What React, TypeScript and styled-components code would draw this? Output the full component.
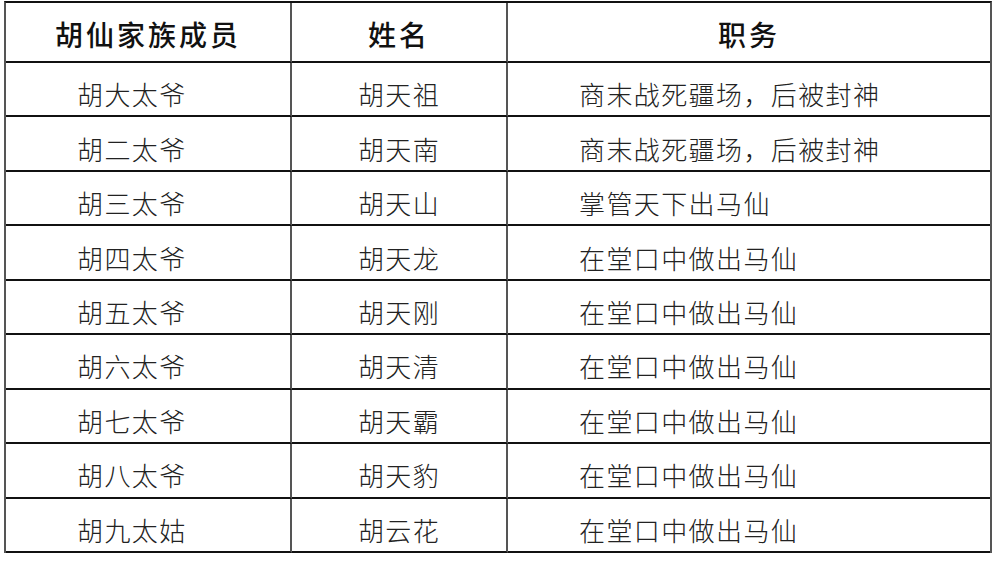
import * as React from 'react'
import styled, { createGlobalStyle } from 'styled-components'

const GlobalStyle = createGlobalStyle`
  html, body {
    margin: 0;
    padding: 0;
    background: #ffffff;
  }
  body {
    font-family: 'Noto Sans CJK SC', 'Noto Sans', sans-serif;
  }
`

const Page = styled.div`
  width: 1003px;
  height: 567px;
  padding: 1px 0 0 4px;
  box-sizing: border-box;
`

const Table = styled.div`
  display: grid;
  width: 988px;
  grid-template-columns: 286px 216px 1fr;
  grid-template-rows: 60px repeat(9, 54.45px);
  border-top: 2px solid #111;
  border-left: 2px solid #555;
  border-right: 2px solid #555;
  box-sizing: border-box;
`

const Cell = styled.div<{ $align: 'left' | 'center'; $last?: boolean; $head?: boolean }>`
  display: flex;
  align-items: center;
  justify-content: ${p => (p.$align === 'center' ? 'center' : 'flex-start')};
  padding-left: ${p => (p.$align === 'left' ? '71px' : '0')};
  padding-top: ${p => (p.$head ? '4px' : '10px')};
  box-sizing: border-box;
  border-bottom: 2px solid #111;
  border-right: ${p => (p.$last ? 'none' : '2px solid #555')};
  color: ${p => (p.$head ? '#111' : '#222')};
  font-size: ${p => (p.$head ? '28px' : '26px')};
  font-weight: ${p => (p.$head ? 500 : 300)};
  letter-spacing: ${p => (p.$head ? '3px' : '1.4px')};
  line-height: 1;
  white-space: nowrap;
`

const members = [
  ['胡大太爷', '胡天祖', '商末战死疆场，后被封神'],
  ['胡二太爷', '胡天南', '商末战死疆场，后被封神'],
  ['胡三太爷', '胡天山', '掌管天下出马仙'],
  ['胡四太爷', '胡天龙', '在堂口中做出马仙'],
  ['胡五太爷', '胡天刚', '在堂口中做出马仙'],
  ['胡六太爷', '胡天清', '在堂口中做出马仙'],
  ['胡七太爷', '胡天霸', '在堂口中做出马仙'],
  ['胡八太爷', '胡天豹', '在堂口中做出马仙'],
  ['胡九太姑', '胡云花', '在堂口中做出马仙'],
]

export default function App() {
  return (
    <Page>
      <GlobalStyle />
      <Table>
        <Cell $head $align='center'>胡仙家族成员</Cell>
        <Cell $head $align='center'>姓名</Cell>
        <Cell $head $last $align='center'>职务</Cell>
        {members.map(([member, name, duty]) => (
          <React.Fragment key={member}>
            <Cell $align='left'>{member}</Cell>
            <Cell $align='center'>{name}</Cell>
            <Cell $last $align='left'>{duty}</Cell>
          </React.Fragment>
        ))}
      </Table>
    </Page>
  )
}
